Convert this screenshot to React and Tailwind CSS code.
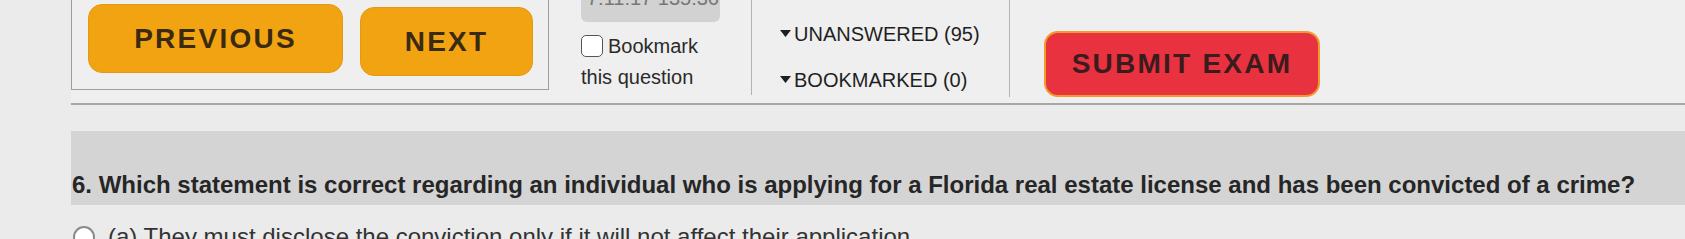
import { useState } from "react";

const NavButton = ({ label, className }) => (
  <button
    className={`flex shrink-0 items-center justify-center rounded-[14px] border border-[#e39a10] bg-[#f1a312] text-[28px] font-bold tracking-[0.08em] text-[#3b2a12] ${className}`}
  >
    {label}
  </button>
);

const FilterRow = ({ label }) => (
  <div className="flex items-center gap-[3px] text-[20px] leading-[24px] text-[#1f1f1f]">
    {/* small down caret */}
    <svg width="11" height="8" viewBox="0 0 11 8">
      <path d="M0 0 L11 0 L5.5 7 Z" fill="#1f1f1f" />
    </svg>
    <span>{label}</span>
  </div>
);

const App = () => {
  const [bookmarked, setBookmarked] = useState(false);

  return (
    <div className="h-[239px] w-[1685px] overflow-hidden bg-[#ebebeb] pl-[71px] font-['Liberation_Sans',Arial,sans-serif]">
      {/* Header bar */}
      <div className="flex h-[105px] items-start border-b-2 border-[#a7a7a7] bg-[#efefef]">
        {/* Previous / Next */}
        <div className="flex h-[90px] w-[478px] shrink-0 items-start gap-[17px] border-x border-b border-[#9d9d9d] pl-[16px] pt-[4px]">
          <NavButton label="PREVIOUS" className="h-[69px] w-[255px]" />
          <NavButton label="NEXT" className="mt-[3px] h-[69px] w-[173px]" />
        </div>

        {/* Timer + bookmark */}
        <div className="flex h-[95px] w-[203px] shrink-0 flex-col border-r border-[#b3b3b3] pl-[32px]">
          <div className="h-[22px] w-[139px] overflow-hidden rounded-b-md bg-[#d2d2d2]">
            <div className="-mt-[14px] whitespace-nowrap pl-[6px] text-[20px] leading-[24px] text-[#777]">
              7:11:17 135:36
            </div>
          </div>
          <label className="mt-[12px] flex items-center gap-[5px] text-[20px] leading-[24px] text-[#2a2a2a]">
            <input
              type="checkbox"
              checked={bookmarked}
              onChange={() => setBookmarked(!bookmarked)}
              className="h-[22px] w-[22px] shrink-0 appearance-none rounded-[5px] border-[1.5px] border-[#555] bg-white"
            />
            Bookmark
          </label>
          <span className="mt-[7px] text-[20px] leading-[24px] text-[#2a2a2a]">
            this question
          </span>
        </div>

        {/* Filters */}
        <div className="flex h-[97px] w-[258px] shrink-0 flex-col gap-[22px] border-r border-[#b3b3b3] pl-[28px] pt-[22px]">
          <FilterRow label="UNANSWERED (95)" />
          <FilterRow label="BOOKMARKED (0)" />
        </div>

        {/* Submit */}
        <button className="ml-[34px] mt-[31px] flex h-[66px] w-[276px] shrink-0 items-center justify-center rounded-[14px] border-2 border-[#f29a2e] bg-[#e9323f] text-[28px] font-bold tracking-[0.08em] text-[#3a1c1e]">
          SUBMIT EXAM
        </button>
      </div>

      {/* Question */}
      <div className="mt-[26px] h-[74px] bg-[#d4d4d4] pl-[1px] pt-[40px] text-[24px] font-bold leading-[28px] text-[#262626]">
        6. Which statement is correct regarding an individual who is applying for a Florida real estate license and has been convicted of a crime?
      </div>

      {/* Answer option */}
      <div className="mt-[18px] flex items-center gap-[13px] pl-[2px]">
        <span className="h-[22px] w-[22px] shrink-0 rounded-full border-2 border-[#8a8a8a] bg-white" />
        <span className="whitespace-nowrap text-[24px] leading-[28px] text-[#333]">
          (a) They must disclose the conviction only if it will not affect their application
        </span>
      </div>
    </div>
  );
};

export default App;
